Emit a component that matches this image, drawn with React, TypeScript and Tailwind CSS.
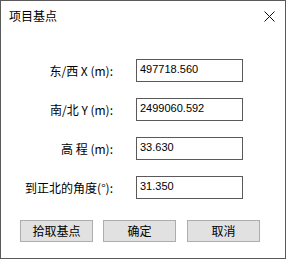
const rows = [
  { label: "东/西 X (m):", value: "497718.560" },
  { label: "南/北 Y (m):", value: "2499060.592" },
  { label: "高 程 (m):", value: "33.630" },
  { label: "到正北的角度(°):", value: "31.350" },
];

const cjk = { fontFamily: '"Noto Sans CJK SC", "Liberation Sans", sans-serif' };

function App() {
  return (
    <div
      className="w-[286px] h-[259px] bg-white border border-[#5a5a5a] flex flex-col text-black"
      style={cjk}
    >
      <div className="h-[30px] flex items-center pl-[8px] pr-[10px] justify-between shrink-0">
        <span className="text-[12px] leading-none">项目基点</span>
        <svg width="11" height="11" viewBox="0 0 11 11" className="mt-[1px]">
          <path d="M0.5 0.5 L10.5 10.5 M10.5 0.5 L0.5 10.5" stroke="#111" strokeWidth="1" />
        </svg>
      </div>

      <div className="flex flex-col gap-[16px] mt-[28px]">
        {rows.map((r) => (
          <div key={r.label} className="flex items-center h-[23px]">
            <div className="w-[112px] text-right text-[12px] leading-none whitespace-nowrap">
              {r.label}
            </div>
            <div
              className="ml-[23px] w-[107px] h-[23px] border border-[#5a5a5a] bg-white pl-[3px] pt-[3px] text-[11px] leading-[13px]"
              style={{ fontFamily: '"Liberation Sans", Arial, sans-serif' }}
            >
              {r.value}
            </div>
          </div>
        ))}
      </div>

      <div className="flex mt-[21px] pl-[19px]">
        <button className="w-[73px] h-[22px] bg-[#e1e1e1] border border-[#adadad] text-[12px] leading-none">
          拾取基点
        </button>
        <button className="ml-[10px] w-[73px] h-[22px] bg-[#e1e1e1] border border-[#adadad] text-[12px] leading-none">
          确定
        </button>
        <button className="ml-[11px] w-[73px] h-[22px] bg-[#e1e1e1] border border-[#adadad] text-[12px] leading-none">
          取消
        </button>
      </div>
    </div>
  );
}

export default App;
